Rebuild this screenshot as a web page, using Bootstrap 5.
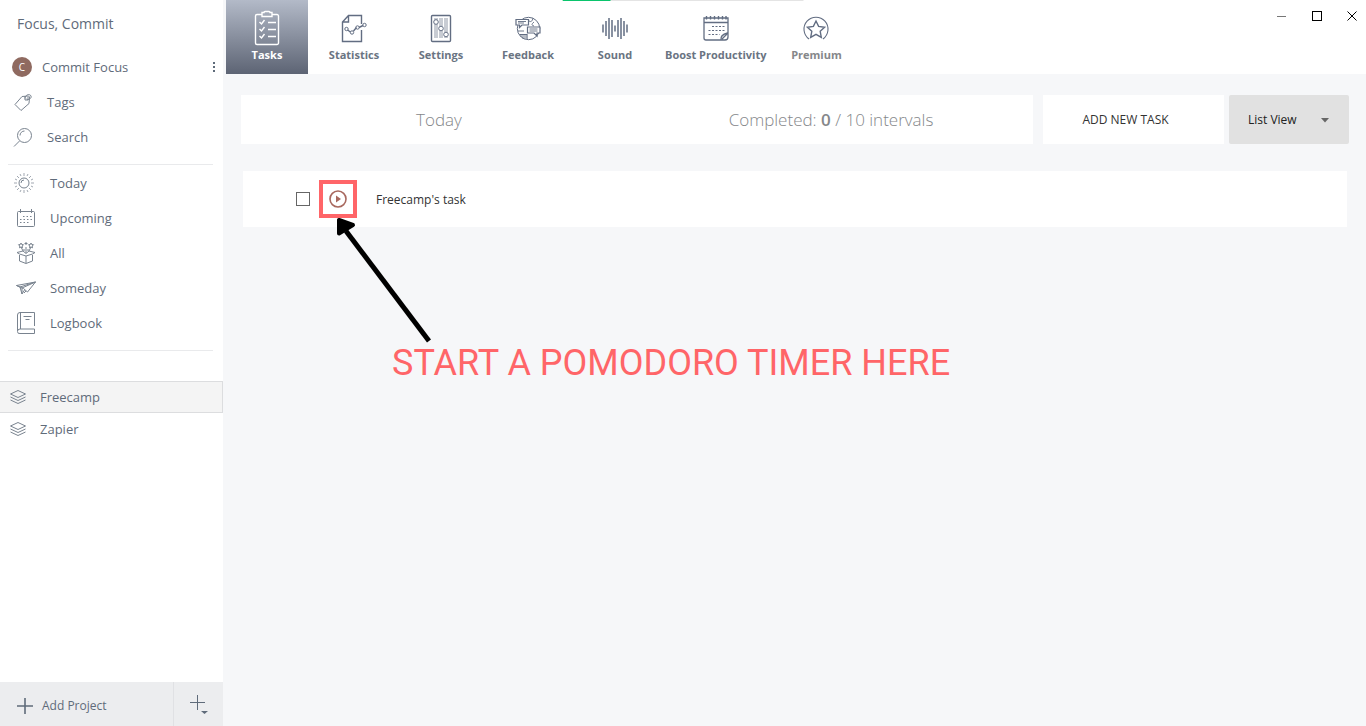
<!DOCTYPE html>
<html lang="en">
<head>
<meta charset="utf-8">
<meta name="viewport" content="width=device-width, initial-scale=1">
<title>Focus, Commit</title>
<link href="https://cdn.jsdelivr.net/npm/bootstrap@5.3.0/dist/css/bootstrap.min.css" rel="stylesheet">
<style>
  :root { --ink: #5f6b7a; --line: #e9eaec; --canvas: #f6f7f9; --accent: #ff6568; }
  body { font-family: "Open Sans", "Noto Sans", sans-serif; font-size: 13px; line-height: 20px; color: var(--ink); background: var(--canvas); }
  svg { fill: none; stroke: currentColor; display: block; flex: none; overflow: visible; }
  .side { width: 223px; flex: none; background: #fff; }
  .brand { font-size: 14px; padding: 14px 17px 15px; }
  .side-link { display: flex; align-items: center; height: 35px; color: var(--ink); text-decoration: none; }
  .side-link .pic { width: 24px; display: flex; justify-content: center; flex: none; color: #79838f; }
  .group-top .side-link { padding-left: 11px; gap: 12px; }
  .group-top { padding-bottom: 10px; }
  .group-mid .side-link { padding-left: 14px; gap: 12px; }
  .group-top .account { padding-left: 10px; gap: 8px; }
  .avatar { width: 20px; height: 20px; border-radius: 50%; background: #8f6a60; color: #fff; font-size: 10px; display: flex; align-items: center; justify-content: center; }
  .dots { color: var(--ink); padding: 4px 7px; }
  .rule { height: 1px; margin: 0 10px 0 8px; background: var(--line); }
  .group-mid { padding-bottom: 10px; }
  .projects { padding-top: 30px; }
  .projects .side-link { height: 32px; padding-left: 6px; gap: 10px; border: 1px solid transparent; border-left: 0; }
  .projects .active { background: #f4f4f4; border-color: #dcdddf; }
  .side-foot { height: 44px; background: #ecedef; }
  .side-foot button { border-radius: 0; padding: 4px 17px 0; font-size: 12px; color: var(--ink); }
  .side-foot .more { width: 50px; padding: 0; border-left: 1px solid #e0e1e4; }
  .topbar { background: #fff; height: 74px; margin-left: 3px; }
  .tabs { gap: 5px; }
  .tab { min-width: 82px; height: 74px; font-size: 11px; font-weight: 700; line-height: 16px; padding: 10px 4px 0; color: #6a7482; text-decoration: none; white-space: nowrap; display: flex; flex-direction: column; align-items: center; gap: 1px; }
  .tab svg { width: 36px; height: 36px; color: #626d82; }
  .tab.active, .tab.active svg { color: #fff; }
  .tab.active { background: linear-gradient(#b3bac8, #5d6474); }
  .tab.muted { color: #85878a; }
  .cycle { width: 241px; height: 1px; border-radius: 0; background: #e4e4e4; z-index: 2; }
  .cycle .progress-bar { background: #0ac46c; }
  .win { padding: 6px 4px; gap: 15px; color: #000; }
  .win button { width: 20px; height: 20px; display: flex; align-items: center; justify-content: center; color: #000; padding: 0; }
  .work { padding: 21px 17px 0 18px; }
  .summary { height: 49px; background: #fff; font-size: 17px; font-weight: 300; color: #85878a; margin-right: 10px; }
  .summary strong { font-weight: 600; }
  .add-task { width: 181px; height: 49px; background: #fff; border-radius: 0; font-size: 12px; color: #333; padding: 0 16px 0 0; margin-right: 5px; }
  .view-pick { width: 120px; height: 49px; background-color: #e1e1e1; border: 0; border-radius: 2px; font-size: 12px; color: #222; padding: 0 19px; appearance: none; }
  .view-wrap svg { right: 20px; top: 23px; pointer-events: none; }
  .task { height: 56px; background: #fff; margin: 27px 2px 0; padding-left: 53px; color: #333; font-size: 12px; }
  .task .form-check-input { width: 14px; height: 14px; margin: 0 9px 0 0; border: 1px solid #666; border-radius: 0; }
  .task label { padding-top: 2px; }
  .spot { width: 38px; height: 38px; border: 4px solid var(--accent); margin-right: 19px; }
  .spot button { color: #a8685e; }
  .arrow { left: 14px; top: 33px; z-index: 1; }
  .hint { font-family: Roboto, sans-serif; font-size: 36px; line-height: 42px; color: var(--accent); margin: 115px 0 0 151px; }
</style>
</head>
<body>
<div class="d-flex min-vh-100">
  <aside class="side d-flex flex-column">
    <div class="brand">Focus, Commit</div>
    <nav class="group-top" aria-label="Account">
      <div class="d-flex align-items-center justify-content-between">
        <a class="side-link account" href="#"><span class="pic"><span class="avatar">C</span></span>Commit Focus</a>
        <button class="btn border-0 dots" type="button" aria-label="Account menu"><svg width="4" height="12"><path d="M1 1h2v2H1zM1 5h2v2H1zM1 9h2v2H1z" fill="currentColor" stroke="none"/></svg></button>
      </div>
      <a class="side-link" href="#"><span class="pic"><svg width="20" height="20"><path d="M2 12.500 9 4.500 15.500 4l1 1-.5 6.500-8 7z"/><path d="M12 6.500c0-4 5-5 6-2.500s-3 4.500-4.500 3M12 4v4h3V5"/></svg></span>Tags</a>
      <a class="side-link" href="#"><span class="pic"><svg width="20" height="20"><circle cx="11.500" cy="8.500" r="7"/><path d="M1 19.500 6.500 14M7 8.500A4.500 4.500 0 0 1 11.500 4"/></svg></span>Search</a>
    </nav>
    <div class="rule"></div>
    <nav class="group-mid" aria-label="Lists">
      <a class="side-link" href="#"><span class="pic pe-1"><svg width="20" height="20"><circle cx="10" cy="10" r="5"/><path d="M7 10a3 3 0 0 1 3-3" /><path d="M10 0v3M10 17v3M0 10h3M17 10h3M3 3l2 2M15 15l2 2M3 17l2-2M15 5l2-2M6 1l1 2M14 1l-1 2M1 6l2 1M1 14l2-1M19 6l-2 1M19 14l-2-1M6 19l1-2M14 19l-1-2" stroke-width=".7"/></svg></span>Today</a>
      <a class="side-link" href="#"><span class="pic"><svg width="20" height="18"><rect x="1.500" y="2.500" width="17" height="15" rx="1"/><path d="M4.500 0v4M15.500 0v4"/><path d="M7 7.500h10M4 10.500h13M4 13.500h10" stroke-dasharray="1.500 2"/></svg></span>Upcoming</a>
      <a class="side-link" href="#"><span class="pic"><svg width="20" height="22"><path d="M3.500 13v6l6.500 2.500 6.500-2.500v-6M10 14v7M3.500 12 10 14l6.500-2M3.500 12 1 10.500 7 9l3 2.500L13 9l6 1.500-2.500 1.500M7 9 5 5M13 9l2-4M10 11V5M8 9V7M12 9V7M5 1l.7 1.500 1.800.2-1.300 1.300.3 1.800L5 5l-1.500.8.300-1.800L2.500 2.700l1.800-.2zM15 1l.7 1.500 1.800.2-1.300 1.300.3 1.800L15 5l-1.500.8.300-1.800-1.300-1.300 1.800-.2zM10 0v3M8.500 1.500h3"/></svg></span>All</a>
      <a class="side-link" href="#"><span class="pic"><svg width="20" height="14"><path d="M.5 4.500 19.500 1l-8 10-4-3.500zM4 6l15.500-5L6 7v6l2.500-4M.5 4.500 4 6l2 7M8 12l2-2"/></svg></span>Someday</a>
      <a class="side-link" href="#"><span class="pic"><svg width="18" height="22"><path d="M17.500 14V.5H3Q.5.5.5 3v16M3.500.5V17M17.500 17H3Q.5 17 .5 19.500T3 21.500h14.500V17M6.500 4.500h8M8.500 7.500h4"/></svg></span>Logbook</a>
    </nav>
    <div class="rule"></div>
    <nav class="projects flex-grow-1" aria-label="Projects">
      <a class="side-link active" href="#" aria-current="true"><span class="pic"><svg width="16" height="14"><path d="M.5 4 8 .5 15.500 4 8 7.500zM.5 7 8 10.500 15.500 7M.5 10 8 13.500 15.500 10"/></svg></span>Freecamp</a>
      <a class="side-link" href="#"><span class="pic"><svg width="16" height="14"><path d="M.5 4 8 .5 15.500 4 8 7.500zM.5 7 8 10.500 15.500 7M.5 10 8 13.500 15.500 10"/></svg></span>Zapier</a>
    </nav>
    <div class="side-foot d-flex">
      <button class="btn border-0 flex-grow-1 d-flex align-items-center" type="button"><svg class="me-2" width="17" height="16"><path d="M0 8h16M8 0v16" stroke-width="1.600"/></svg>Add Project</button>
      <button class="more btn border-top-0 border-end-0 border-bottom-0 d-flex align-items-center justify-content-center" type="button" aria-label="More add options"><svg width="20" height="20"><path d="M1 8.500h15M8.500 1v15"/><path d="M12 17h7l-3.500 3z" fill="currentColor" stroke="none"/></svg></button>
    </div>
  </aside>

  <main class="flex-grow-1">
    <div class="progress cycle position-absolute top-0 start-50 translate-middle-x" role="progressbar" aria-label="Intervals" aria-valuenow="20" aria-valuemin="0" aria-valuemax="100"><div class="progress-bar" style="width:20%"></div></div>
    <header class="topbar d-flex justify-content-between align-items-start">
      <nav class="tabs d-flex" aria-label="Sections">
        <a class="tab active" href="#" aria-current="page"><svg viewBox="0 0 36 36"><path d="M13 4.500H8A1.500 1.500 0 0 0 6.500 6v27A1.500 1.500 0 0 0 8 34.500h20a1.500 1.500 0 0 0 1.500-1.500V6A1.500 1.500 0 0 0 28 4.500h-5M13 2.500h2q0-1 1-1h4q1 0 1 1h2v4H13zM19 12.500h8M19 19.500h8M19 26.500h8M10.500 12l2 2 3-4M10.500 19l2 2 3-4M10.500 26l2 2 3-4" stroke-width="1.400"/></svg>Tasks</a>
        <a class="tab" href="#"><svg viewBox="0 0 36 36"><path d="M25.500 14V5.500H12.500l-6 6.500v19.500h19V20M12.500 5.500V12h-6" stroke-width="1.400"/><path d="m11.500 20 3 2M17.500 21l3-3.500M23 17.500l4-2" stroke-width="1.400"/><circle cx="10.500" cy="19" r="1.700"/><circle cx="16" cy="22.500" r="1.700"/><circle cx="21.500" cy="17.500" r="1.700"/><circle cx="28.500" cy="15" r="1.700"/></svg>Statistics</a>
        <a class="tab" href="#"><svg viewBox="0 0 36 36"><rect x="8.500" y="5.500" width="19" height="26" rx="1" stroke-width="1.400"/><path d="M12 14v14M14 14v14M12 8v2M14 8v2M17 8v8M19 8v8M17 21v7M19 21v7M22 8v14M24 8v14M22 27v1M24 27v1" stroke-width=".7"/><g fill="#fff"><circle cx="13" cy="12" r="2.300"/><circle cx="18" cy="18.500" r="2.300"/><circle cx="23" cy="24.500" r="2.300"/></g></svg>Settings</a>
        <a class="tab" href="#"><svg viewBox="0 0 36 36"><circle cx="18.500" cy="18.500" r="11.200"/><path d="M6 9.500h12.500V15H12l-2.500 2.500V15H6zM17.500 17h12.500v6h-3v3l-3-3h-6.500zM9.500 24.500H17v5" fill="#fff" stroke-width="1.200"/><path d="M8 11.500h8M8 13h6M19.500 19h8M19.500 21h8M10 26h6M12 28h4M19 11q3 2 4-3M24 16q-4-1 0-4M8 21h6" stroke-width=".9"/></svg>Feedback</a>
        <a class="tab" href="#"><svg viewBox="0 0 36 36"><path d="M6 14.500v8M9 11v15M12 8v21M15 10v17M18 15.500v6M21 10v17M24 8v21M27 11v15M30 14.500v8" stroke-width="1.500"/></svg>Sound</a>
        <a class="tab" href="#"><svg viewBox="0 0 36 36"><path d="M30 23V8H6v20a2 2 0 0 0 2 2h19a3 3 0 0 0 3-3v-4M6 12.500h24M23 30q-1-5 6.500-7M24 29l5-5" stroke-width="1.300"/><path d="M8.500 6v3.500M12.500 6v3.500M16.500 6v3.500M20.500 6v3.500M24.500 6v3.500M28 6v3.500" stroke-width="1.400"/><path d="M14 16.500h13M10.500 20.500h16M10.500 24.500h11" stroke-dasharray="2 1.500"/></svg>Boost Productivity</a>
        <a class="tab muted" href="#"><svg viewBox="0 0 36 36"><path d="M11 29A12 12 0 1 1 25 29" stroke-width="1.100"/><path d="m18 11 2.600 5.400 6 .8-4.400 4.100 1.100 6-5.300-3-5.300 3 1.100-6-4.400-4.100 6-.8z" stroke-width="1.400"/></svg>Premium</a>
      </nav>
      <div class="win d-flex">
        <button class="btn border-0" type="button" aria-label="Minimize"><svg width="10" height="10"><path d="M0 5.500h9" stroke="#777"/></svg></button>
        <button class="btn border-0" type="button" aria-label="Maximize"><svg width="10" height="10"><rect x=".5" y=".5" width="9" height="9"/></svg></button>
        <button class="btn border-0" type="button" aria-label="Close"><svg width="10" height="10"><path d="m.5.5 9 9M9.500.5l-9 9"/></svg></button>
      </div>
    </header>

    <div class="work">
      <div class="d-flex">
        <div class="summary flex-grow-1 row g-0 align-items-center text-center">
          <div class="col-6">Today</div>
          <div class="col-6 pe-2">Completed: <strong>0</strong> / 10 intervals</div>
        </div>
        <button class="btn border-0 add-task" type="button">ADD NEW TASK</button>
        <div class="view-wrap position-relative">
          <select class="view-pick" aria-label="View"><option>List View</option><option>Board View</option></select>
          <svg class="position-absolute" width="8" height="5"><path d="M0 0h8L4 4.500z" fill="#666" stroke="none"/></svg>
        </div>
      </div>
      <div class="task d-flex align-items-center">
        <input class="form-check-input" type="checkbox" id="task1">
        <div class="spot position-relative d-flex align-items-center justify-content-center">
          <button class="btn border-0 p-0" type="button" aria-label="Start timer"><svg width="18" height="18"><circle cx="9" cy="9" r="8" stroke-width="1.600"/><path d="M7 5.500v7L12 9z" fill="currentColor" stroke="none"/></svg></button>
          <svg class="arrow position-absolute" width="94" height="126"><path d="M9 14 92 124" stroke="#000" stroke-width="5"/><path d="M2 3v13.500L16 8z" fill="#000" stroke="#000" stroke-width="4" stroke-linejoin="round"/></svg>
        </div>
        <label for="task1">Freecamp's task</label>
      </div>
      <p class="hint">START A POMODORO TIMER HERE</p>
    </div>
  </main>
</div>
<script src="https://cdn.jsdelivr.net/npm/bootstrap@5.3.0/dist/js/bootstrap.bundle.min.js"></script>
</body>
</html>
